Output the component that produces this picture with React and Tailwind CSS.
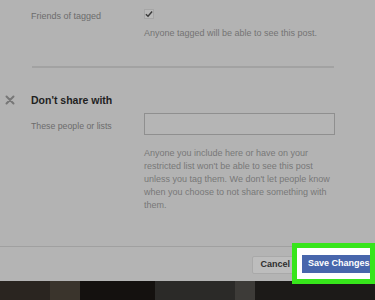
import React from 'react';

const CheckIcon = () => (
  <svg width="9" height="8" viewBox="0 0 9 8" className="block">
    <path d="M1 4.2 L3.4 6.5 L8 1.2" fill="none" stroke="#3a3a3a" strokeWidth="1.6" />
  </svg>
);

const CloseIcon = () => (
  <svg width="10" height="10" viewBox="0 0 10 10" className="block">
    <path d="M1.5 1.5 L8.5 8.5 M8.5 1.5 L1.5 8.5" stroke="#777" strokeWidth="2" strokeLinecap="round" />
  </svg>
);

const App = () => {
  return (
    <div className="w-[375px] h-[300px] overflow-hidden bg-[#b3b3b3] flex flex-col font-['Liberation_Sans',Arial,sans-serif]">
      {/* dialog body */}
      <div className="flex flex-col h-[246px]">
        {/* Friends of tagged */}
        <div className="grid grid-cols-[113px_1fr] pl-[31px] pt-[9px]">
          <span className="text-[9px] leading-[14px] text-[#6c6c6c]">Friends of tagged</span>
          <div className="flex flex-col">
            <div className="w-[10px] h-[10px] border border-[#a6a6a6] bg-[#b9b9b9] flex items-center justify-center">
              <CheckIcon />
            </div>
            <p className="mt-[8px] text-[9px] leading-[12px] text-[#737373]">
              Anyone tagged will be able to see this post.
            </p>
          </div>
        </div>

        <div className="ml-[32px] mt-[27px] w-[302px] h-[2px] bg-[#a2a2a2]" />

        {/* Don't share with */}
        <div className="flex items-center mt-[25px] pl-[5px]">
          <div className="w-[26px]">
            <CloseIcon />
          </div>
          <span className="text-[10.5px] leading-[14px] font-bold text-[#1f1f1f]">Don't share with</span>
        </div>

        <div className="grid grid-cols-[113px_191px] pl-[31px] mt-[6px]">
          <span className="text-[8.75px] leading-[14px] text-[#6c6c6c] pt-[6px]">These people or lists</span>
          <div className="h-[22px] border border-[#8f8f8f] bg-[#b5b5b5]" />
          <div />
          <p className="mt-[12px] text-[9px] leading-[12.9px] text-[#787878]">
            Anyone you include here or have on your restricted list won't be able to see this post
            unless you tag them. We don't let people know when you choose to not share something with
            them.
          </p>
        </div>
      </div>

      {/* footer */}
      <div className="relative h-[35px] border-t border-[#a0a0a0] bg-[#b4b4b4] flex items-start justify-end pt-[9px]">
        <div className="mr-[78px] h-[18px] pl-[7px] pr-[6px] flex items-center bg-[#bdbdbd] border border-[#a9a9a9] rounded-[2px] text-[9px] font-bold text-[#2e2e2e]">
          Cancel
        </div>
        <div className="absolute right-0 top-[-4px] w-[83px] h-[41px] border-[5px] border-[#37e51b] bg-white flex items-center pl-[5px]">
          <div className="h-[18px] w-[80px] bg-[#4866ac] flex items-center pl-[6px] text-[9px] font-bold text-white whitespace-nowrap">
            Save Changes
          </div>
        </div>
      </div>

      {/* background photo strip */}
      <div className="flex-1 flex bg-[#151210]">
        <div className="w-[50px] bg-[#2a2520]" />
        <div className="w-[30px] bg-[#3a342c]" />
        <div className="w-[75px] bg-[#14110f]" />
        <div className="w-[80px] bg-[#2b2a28]" />
        <div className="w-[20px] bg-[#3d3b38]" />
        <div className="flex-1 bg-[#1c1a18]" />
      </div>
    </div>
  );
};

export default App;
